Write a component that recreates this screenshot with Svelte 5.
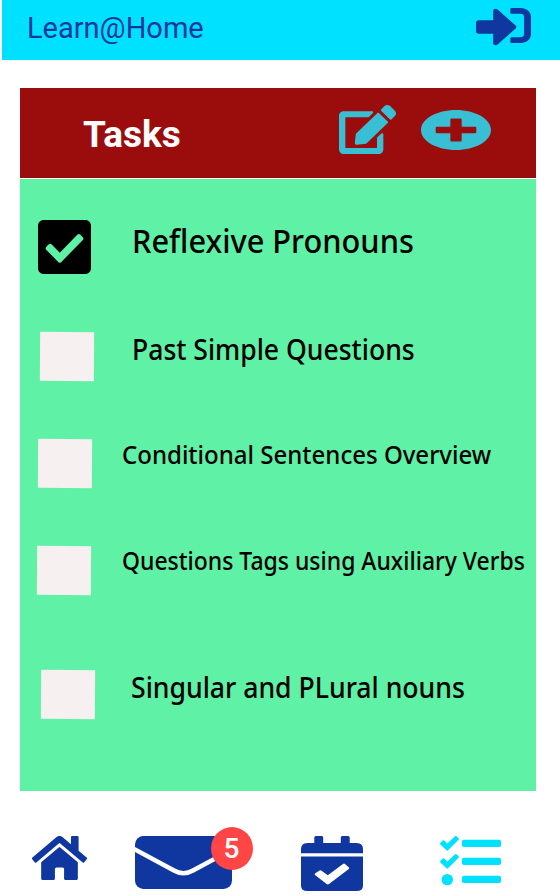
<script>
  let tasks = $state([
    { label: 'Reflexive Pronouns', done: true, height: 109, size: 33, stretch: 0.932, box: 18, drop: 0, gap: 40.5 },
    { label: 'Past Simple Questions', done: false, height: 105, size: 28, stretch: 0.948, box: 20, drop: 3, gap: 37.5 },
    { label: 'Conditional Sentences Overview', done: false, height: 106, size: 25.5, stretch: 0.942, box: 18, drop: 5, gap: 30 },
    { label: 'Questions Tags using Auxiliary Verbs', done: false, height: 127, size: 25, stretch: 0.919, box: 17, drop: 6, gap: 31 },
    { label: 'Singular and PLural nouns', done: false, height: 124, size: 28, stretch: 0.95, box: 21, drop: 3, gap: 36 }
  ]);
  const unread = 5;
</script>

<div class="page">
  <header>
    <span class="brand">Learn@Home</span>
    <svg class="signin" viewBox="0 64 512 384" preserveAspectRatio="none" aria-label="Sign in">
      <path d="M416 448h-84c-6.600 0-12-5.400-12-12v-40c0-6.600 5.400-12 12-12h84c17.700 0 32-14.300 32-32V160c0-17.700-14.300-32-32-32h-84c-6.600 0-12-5.400-12-12V76c0-6.600 5.400-12 12-12h84c53 0 96 43 96 96v192c0 53-43 96-96 96z" />
      <path transform="translate(0 -2) scale(1 1.04)" d="M369 247L201 79c-15-15-41-4.500-41 17v96H24c-13.300 0-24 10.700-24 24v96c0 13.300 10.700 24 24 24h136v96c0 21.500 26 32 41 17l168-168c9.300-9.400 9.300-24.600 0-34z" />
    </svg>
  </header>

  <main>
    <div class="titlebar">
      <h1>Tasks</h1>
      <svg class="edit" viewBox="0 0 576 512" preserveAspectRatio="none" aria-label="Edit">
        <path d="M402.600 83.200l90.200 90.200c3.800 3.800 3.800 10 0 13.800L274.400 405.600l-92.800 10.300c-12.400 1.400-22.900-9.100-21.500-21.500l10.300-92.800L388.800 83.200c3.800-3.800 10-3.800 13.800 0zm162-22.900l-48.800-48.800c-15.200-15.200-39.900-15.200-55.200 0l-35.400 35.400c-3.800 3.800-3.800 10 0 13.800l90.200 90.200c3.800 3.800 10 3.800 13.800 0l35.400-35.400c15.200-15.300 15.200-40 0-55.200zM384 346.200V448H64V128h229.800c3.200 0 6.200-1.300 8.500-3.500l40-40c7.600-7.600 2.200-20.500-8.500-20.500H48C21.500 64 0 85.500 0 112v352c0 26.500 21.500 48 48 48h352c26.500 0 48-21.500 48-48V306.200c0-10.700-12.900-16-20.500-8.500l-40 40c-2.200 2.300-3.500 5.300-3.500 8.500z" />
      </svg>
      <svg class="add" viewBox="8 8 496 496" preserveAspectRatio="none" aria-label="Add">
        <path d="M256 8C119 8 8 119 8 256s111 248 248 248 248-111 248-248S393 8 256 8zm144 276c0 6.600-5.400 12-12 12h-92v92c0 6.600-5.400 12-12 12h-56c-6.600 0-12-5.400-12-12v-92h-92c-6.600 0-12-5.400-12-12v-56c0-6.600 5.400-12 12-12h92v-92c0-6.600 5.400-12 12-12h56c6.600 0 12 5.400 12 12v92h92c6.600 0 12 5.400 12 12v56z" />
      </svg>
    </div>

    <ul>
      {#each tasks as task}
        <li style="height: {task.height}px; padding-left: {task.box}px; gap: {task.gap}px">
          {#if task.done}
            <svg class="checked" viewBox="0 32 448 448" preserveAspectRatio="none" aria-label="Done">
              <path d="M400 480H48c-26.510 0-48-21.490-48-48V80c0-26.510 21.490-48 48-48h352c26.510 0 48 21.490 48 48v352c0 26.510-21.490 48-48 48zm-204.686-98.059l184-184c6.248-6.248 6.248-16.379 0-22.627l-22.627-22.627c-6.248-6.248-16.379-6.249-22.628 0L184 302.745l-70.059-70.059c-6.248-6.248-16.379-6.248-22.628 0l-22.627 22.627c-6.248 6.248-6.248 16.379 0 22.627l104 104c6.249 6.250 16.379 6.250 22.628.001z" />
            </svg>
          {:else}
            <span class="box" style="margin-top: {task.drop}px"></span>
          {/if}
          <span class="label" style="font-size: {task.size}px; transform: scaleX({task.stretch})">{task.label}</span>
        </li>
      {/each}
    </ul>
  </main>

  <nav>
    <svg class="home" viewBox="0 32 576 448" preserveAspectRatio="none" aria-label="Home">
      <path d="M280.370 148.260L96 300.110V464a16 16 0 0 0 16 16l112.060-.290a16 16 0 0 0 15.920-16V368a16 16 0 0 1 16-16h64a16 16 0 0 1 16 16v95.640a16 16 0 0 0 16 16.050L464 480a16 16 0 0 0 16-16V300L295.670 148.260a12.190 12.190 0 0 0-15.300 0zM571.600 251.470L488 182.560V44.050a12 12 0 0 0-12-12h-56a12 12 0 0 0-12 12v72.610L318.470 43a48 48 0 0 0-61 0L4.340 251.470a12 12 0 0 0-1.600 16.900l25.500 31A12 12 0 0 0 45.150 301l235.220-193.740a12.190 12.190 0 0 1 15.300 0L530.900 301a12 12 0 0 0 16.900-1.600l25.500-31a12 12 0 0 0-1.700-16.930z" />
    </svg>
    <div class="mail">
      <svg viewBox="0 0 97 53" aria-label="Messages">
        <rect width="97" height="53" rx="8.500" />
        <path class="flap" d="M-1 13L39 34.500Q48.500 40 58 34.500L98 13" />
      </svg>
      <span class="badge">{unread}</span>
    </div>
    <svg class="calendar" viewBox="0 0 62 55" aria-label="Calendar">
      <path d="M0 17.200V13Q0 7 6.500 7H13.300V1.500Q13.300 0 14.800 0H20.700Q22.200 0 22.200 1.500V7H39.800V1.500Q39.800 0 41.300 0H47.200Q48.700 0 48.700 1.500V7H55.500Q62 7 62 13V17.200ZM0 20.600H62V49.500Q62 55 55.500 55H6.500Q0 55 0 49.500Z" />
      <path class="tick" d="M14 37.500L18.500 34.500Q19.500 33.800 20.500 34.700L26.800 39.300L42 28Q43 27.200 44 28L48 31.500Q48.500 32.200 47.800 33L28 48Q26.800 48.900 25.600 48L14 39Q13.200 38.200 14 37.500Z" />
    </svg>
    <svg class="list" viewBox="0 0 61 50" aria-label="Tasks">
      <rect x="22" y="3.700" width="39" height="7.300" rx="1.800" />
      <rect x="22" y="21.700" width="39" height="7.300" rx="1.800" />
      <rect x="22" y="39.800" width="39" height="7.300" rx="1.800" />
      <path d="M.4 6.700L2.700 4.500Q3.500 3.800 4.300 4.500L7.300 7.500L15 .2Q15.700-.3 16.500.3L18.600 2.300Q19.300 3 18.600 3.700L8 14.300Q7.200 15 6.400 14.300L.4 8.500Q-.2 7.700.4 6.700Z" />
      <path transform="translate(0 18)" d="M.4 6.700L2.700 4.500Q3.500 3.800 4.300 4.500L7.300 7.500L15 .2Q15.700-.3 16.500.3L18.600 2.300Q19.300 3 18.600 3.700L8 14.300Q7.200 15 6.400 14.300L.4 8.500Q-.2 7.700.4 6.700Z" />
      <circle cx="7.300" cy="43.600" r="5.700" />
    </svg>
  </nav>
</div>

<style>
  :global(body) { background: #fff; }
  .page { width: 560px; height: 896px; overflow: hidden; display: flex; flex-direction: column; font-family: Roboto, sans-serif; }
  svg { display: block; flex: none; }
  header { height: 60px; margin-left: 2px; padding: 0 29px 0 25px; background: #00e1ff; color: #0f379f; display: flex; justify-content: space-between; align-items: flex-start; flex: none; box-sizing: border-box; }
  .brand { font-size: 29px; line-height: 56px; }
  .signin { width: 55px; height: 35px; margin-top: 8px; fill: #0f379f; overflow: visible; }
  main { width: 516px; margin: 28px 0 0 20px; flex: none; }
  .titlebar { height: 90px; background: #9b0c0d; display: flex; align-items: flex-start; box-sizing: border-box; padding-left: 63px; }
  h1 { margin: 0; width: 256px; color: #fff; font-size: 37px; line-height: 94px; font-weight: 700; }
  .edit { width: 57px; height: 49px; margin-top: 17px; fill: #39bfd3; }
  .add { width: 70px; height: 40px; margin: 22px 0 0 25px; fill: #39bfd3; }
  ul { height: 612px; margin: 1px 0 0; padding: 41px 0 0; list-style: none; background: #5ff1a5; box-sizing: border-box; }
  li { display: flex; align-items: flex-start; box-sizing: border-box; }
  .checked { width: 53px; height: 54px; }
  .box { width: 54px; height: 49px; background: #f6f0f0; flex: none; transform: rotate(.35deg); }
  .label { font-family: "Noto Sans", sans-serif; font-weight: 500; line-height: 41px; white-space: nowrap; transform-origin: left; color: #000; }
  nav { display: flex; align-items: flex-start; padding: 45px 0 0 32px; fill: #0f379f; }
  .home { width: 55px; height: 44px; }
  .mail { position: relative; margin-left: 48px; }
  .mail svg { width: 97px; height: 53px; }
  .flap { fill: none; stroke: #fff; stroke-width: 4.500; }
  .badge { position: absolute; left: 76px; top: -9px; width: 42px; height: 43px; border-radius: 50%; background: #ff4545; color: #fff; font-size: 28px; font-weight: 500; line-height: 43px; text-align: center; text-indent: -1px; }
  .calendar { width: 62px; height: 55px; margin-left: 69px; }
  .tick { fill: #fff; }
  .list { width: 61px; height: 50px; margin-left: 77px; fill: #00e1ff; }
</style>
